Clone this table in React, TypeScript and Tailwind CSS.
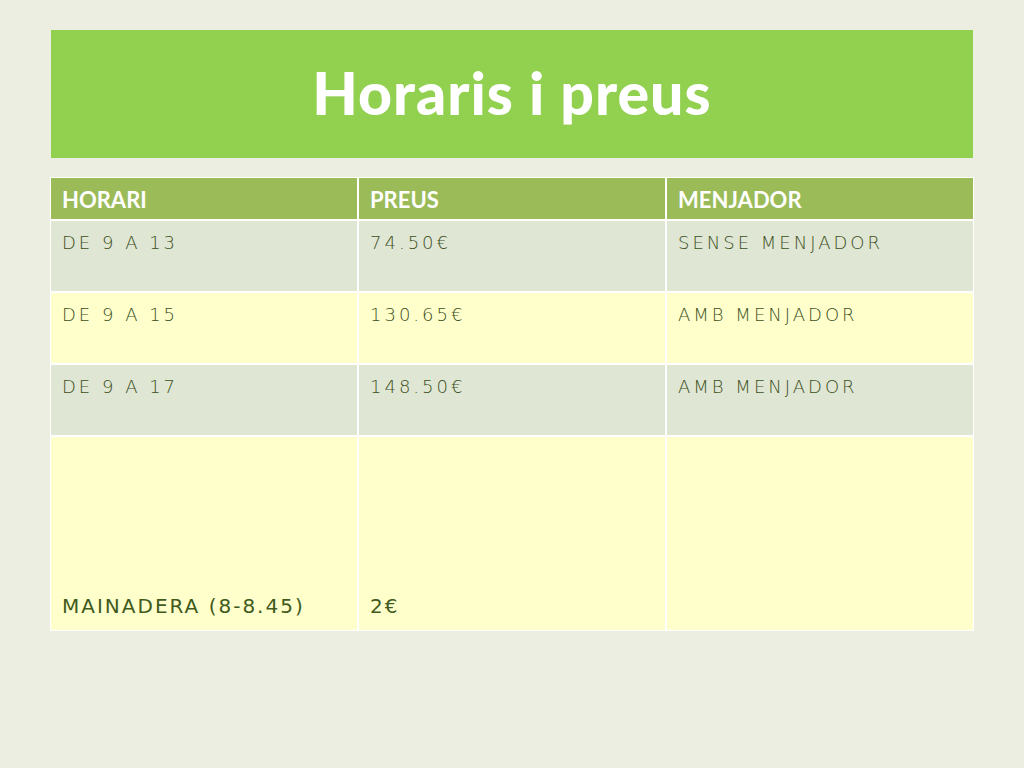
import React from "react";

const hand = { fontFamily: '"DejaVu Sans", "Open Sans", sans-serif' };

type Row = { cells: string[]; bg: string; tall?: boolean };

const rows: Row[] = [
  { cells: ["DE 9 A 13", "74.50€", "SENSE MENJADOR"], bg: "bg-[#dfe6d3]" },
  { cells: ["DE 9 A 15", "130.65€", "AMB MENJADOR"], bg: "bg-[#ffffcc]" },
  { cells: ["DE 9 A 17", "148.50€", "AMB MENJADOR"], bg: "bg-[#dfe6d3]" },
  { cells: ["MAINADERA (8-8.45)", "2€", ""], bg: "bg-[#ffffcc]", tall: true },
];

export default function App() {
  return (
    <div className="w-[1024px] h-[768px] bg-[#ebeee0] overflow-hidden pt-[30px]">
      <div className="mx-[51px] h-[128px] bg-[#92d050] flex items-center justify-center">
        <h1
          className="text-white text-[59px] font-black tracking-[1px] leading-none pb-[4px]"
          style={{ fontFamily: 'Lato, "Open Sans", sans-serif' }}
        >
          Horaris i preus
        </h1>
      </div>
      <div className="mt-[19px] ml-[50px] w-[924px] bg-white p-[1px] flex flex-col gap-[2px]">
        <div className="grid grid-cols-3 gap-[2px] h-[41px]">
          {["HORARI", "PREUS", "MENJADOR"].map((h) => (
            <div
              key={h}
              className="bg-[#9bbb59] text-white text-[22px] font-bold pl-[11px] pt-[1px] flex items-center"
              style={{ fontFamily: 'Lato, "Open Sans", sans-serif' }}
            >
              {h}
            </div>
          ))}
        </div>
        {rows.map((r, i) => (
          <div
            key={i}
            className={`grid grid-cols-3 gap-[2px] ${r.tall ? "h-[193px]" : "h-[70px]"}`}
          >
            {r.cells.map((c, j) => (
              <div
                key={j}
                className={`${r.bg} pl-[11px] flex whitespace-nowrap ${
                  r.tall
                    ? "items-end pb-[9px] font-normal text-[#3f5a1c] text-[20px] tracking-[2px]"
                    : "items-start pt-[8px] font-extralight text-[#3c4f1c] text-[18px] tracking-[3px]"
                }`}
                style={hand}
              >
                {c}
              </div>
            ))}
          </div>
        ))}
      </div>
    </div>
  );
}
